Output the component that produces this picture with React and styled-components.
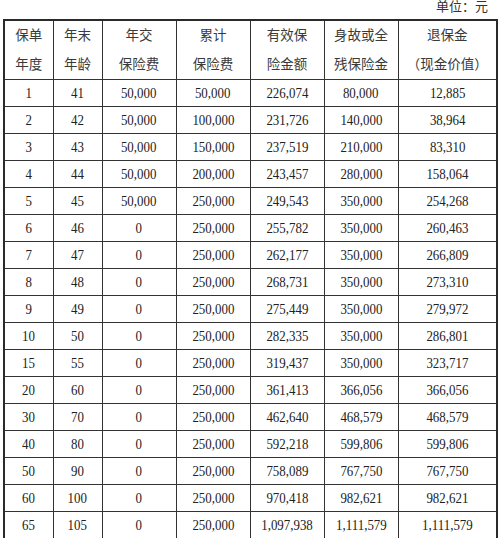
import React from "react";
import styled, { createGlobalStyle } from "styled-components";

const GlobalStyle = createGlobalStyle`
  html, body {
    margin: 0;
    padding: 0;
    background: #ffffff;
  }
  body {
    font-family: "Liberation Serif", "Noto Sans CJK SC", serif;
    color: #222;
  }
`;

const Page = styled.div`
  width: 500px;
  height: 538px;
  padding-left: 3px;
  box-sizing: border-box;
  overflow: hidden;
`;

const Unit = styled.div`
  height: 19px;
  line-height: 13px;
  font-size: 13px;
  text-align: right;
  padding-right: 12px;
  color: #333;
`;

const Table = styled.table`
  width: 493px;
  border-collapse: collapse;
  table-layout: fixed;
  border: 2px solid #2a2a2a;
`;

const HeadCell = styled.th`
  font-weight: normal;
  font-size: 13.5px;
  line-height: 29px;
  height: 55px;
  padding: 0;
  text-align: center;
  border: 1px solid #333;
  color: #3a3a3a;
  white-space: nowrap;
`;

const Row = styled.tr`
  height: 27px;
`;

const Cell = styled.td`
  padding: 0;
  text-align: center;
  border: 1px solid #333;
  color: #222;
  white-space: nowrap;
`;

const Num = styled.span`
  display: inline-block;
  font-size: 15px;
  transform: scaleX(0.86);
`;

const cols = [49, 49, 74, 74, 74, 74, 99];

const headers = [
  ["保单", "年度"],
  ["年末", "年龄"],
  ["年交", "保险费"],
  ["累计", "保险费"],
  ["有效保", "险金额"],
  ["身故或全", "残保险金"],
  ["退保金", "（现金价值）"],
];

const rows = [
  ["1", "41", "50,000", "50,000", "226,074", "80,000", "12,885"],
  ["2", "42", "50,000", "100,000", "231,726", "140,000", "38,964"],
  ["3", "43", "50,000", "150,000", "237,519", "210,000", "83,310"],
  ["4", "44", "50,000", "200,000", "243,457", "280,000", "158,064"],
  ["5", "45", "50,000", "250,000", "249,543", "350,000", "254,268"],
  ["6", "46", "0", "250,000", "255,782", "350,000", "260,463"],
  ["7", "47", "0", "250,000", "262,177", "350,000", "266,809"],
  ["8", "48", "0", "250,000", "268,731", "350,000", "273,310"],
  ["9", "49", "0", "250,000", "275,449", "350,000", "279,972"],
  ["10", "50", "0", "250,000", "282,335", "350,000", "286,801"],
  ["15", "55", "0", "250,000", "319,437", "350,000", "323,717"],
  ["20", "60", "0", "250,000", "361,413", "366,056", "366,056"],
  ["30", "70", "0", "250,000", "462,640", "468,579", "468,579"],
  ["40", "80", "0", "250,000", "592,218", "599,806", "599,806"],
  ["50", "90", "0", "250,000", "758,089", "767,750", "767,750"],
  ["60", "100", "0", "250,000", "970,418", "982,621", "982,621"],
  ["65", "105", "0", "250,000", "1,097,938", "1,111,579", "1,111,579"],
];

export default function App() {
  return (
    <Page>
      <GlobalStyle />
      <Unit>单位：元</Unit>
      <Table>
        <colgroup>
          {cols.map((w, i) => (
            <col key={i} style={{ width: w }} />
          ))}
        </colgroup>
        <thead>
          <tr>
            {headers.map((h, i) => (
              <HeadCell key={i}>
                {h[0]}
                <br />
                {h[1]}
              </HeadCell>
            ))}
          </tr>
        </thead>
        <tbody>
          {rows.map((r, i) => (
            <Row key={i}>
              {r.map((v, j) => (
                <Cell key={j}>
                  <Num>{v}</Num>
                </Cell>
              ))}
            </Row>
          ))}
        </tbody>
      </Table>
    </Page>
  );
}
